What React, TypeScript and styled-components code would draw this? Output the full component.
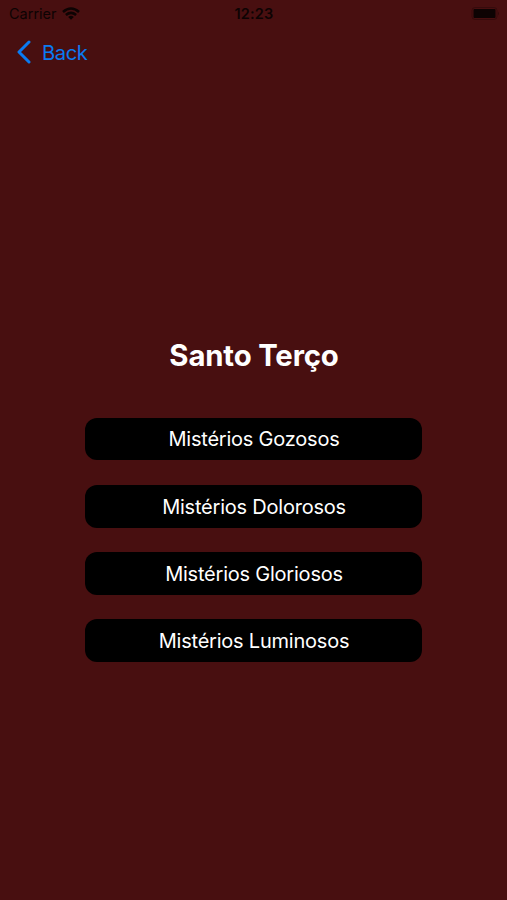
import React from "react";
import styled, { createGlobalStyle } from "styled-components";

const GlobalStyle = createGlobalStyle`
  * { box-sizing: border-box; }
  body { margin: 0; background: #480f10; }
`;

const Screen = styled.div`
  width: 507px;
  height: 900px;
  display: flex;
  flex-direction: column;
  background: #480f10;
  font-family: Inter, sans-serif;
  overflow: hidden;
`;

const StatusBar = styled.header`
  display: grid;
  grid-template-columns: 1fr auto 1fr;
  align-items: center;
  height: 27px;
  padding: 0 8px 0 9px;
  color: #0d0303;
  font-size: 14.5px;
`;

const Carrier = styled.div`
  display: flex;
  align-items: center;
  gap: 5px;
`;

const Clock = styled.time`
  font-weight: 600;
  letter-spacing: 0.2px;
`;

const BatteryIcon = styled.svg`
  justify-self: end;
`;

const BackButton = styled.button`
  display: flex;
  align-items: center;
  align-self: flex-start;
  gap: 10px;
  height: 50px;
  padding: 0 16px;
  border: 0;
  background: none;
  color: #0a7bf2;
  font: 400 20.2px Inter, sans-serif;
  letter-spacing: -0.45px;
`;

const Content = styled.main`
  display: flex;
  flex-direction: column;
  align-items: center;
  padding-top: 260px;
`;

const Title = styled.h1`
  margin: 0 0 42.6px;
  padding-left: 1px;
  color: #fff;
  font-size: 29.3px;
  line-height: 38px;
  font-weight: 700;
  letter-spacing: -0.15px;
`;

const MysteryList = styled.nav`
  display: flex;
  flex-direction: column;
  gap: 24.5px;
`;

const MysteryButton = styled.button`
  width: 337.5px;
  height: 42.75px;
  padding: 1px 0 0 1px;
  border: 0;
  border-radius: 12px;
  background: #000;
  color: #fff;
  font: 400 20px Inter, sans-serif;
  letter-spacing: -0.22px;
`;

const mysteries = ["Mistérios Gozosos", "Mistérios Dolorosos", "Mistérios Gloriosos", "Mistérios Luminosos"];

export default function App() {
  return (
    <Screen>
      <GlobalStyle />
      <StatusBar>
        <Carrier>
          <span>Carrier</span>
          <svg width="18" height="13" viewBox="0 0 18 13" fill="none" stroke="currentColor" strokeWidth="2.6">
            <path d="M1 4.9Q9-1.9 17 4.9M3.9 8Q9 3.8 14.1 8" />
            <path d="M6.2 10Q9 7.7 11.8 10L9 12.8Z" fill="currentColor" stroke="none" />
          </svg>
        </Carrier>
        <Clock>12:23</Clock>
        <BatteryIcon width="28" height="13" viewBox="0 0 28 13" fill="currentColor">
          <rect x="1" y="0.5" width="25" height="12" rx="3" fill="none" stroke="currentColor" strokeOpacity="0.3" />
          <rect x="2.5" y="2" width="22" height="9" rx="1" />
          <path d="M27 4.5q2 2 0 4z" opacity="0.35" />
        </BatteryIcon>
      </StatusBar>
      <BackButton>
        <svg width="16" height="24" viewBox="0 0 16 24" fill="none" stroke="currentColor" strokeWidth="3" strokeLinecap="round" strokeLinejoin="round">
          <path d="M13 2L3 12L13 22" />
        </svg>
        <span>Back</span>
      </BackButton>
      <Content>
        <Title>Santo Terço</Title>
        <MysteryList>
          {mysteries.map((name) => <MysteryButton key={name}>{name}</MysteryButton>)}
        </MysteryList>
      </Content>
    </Screen>
  );
}
